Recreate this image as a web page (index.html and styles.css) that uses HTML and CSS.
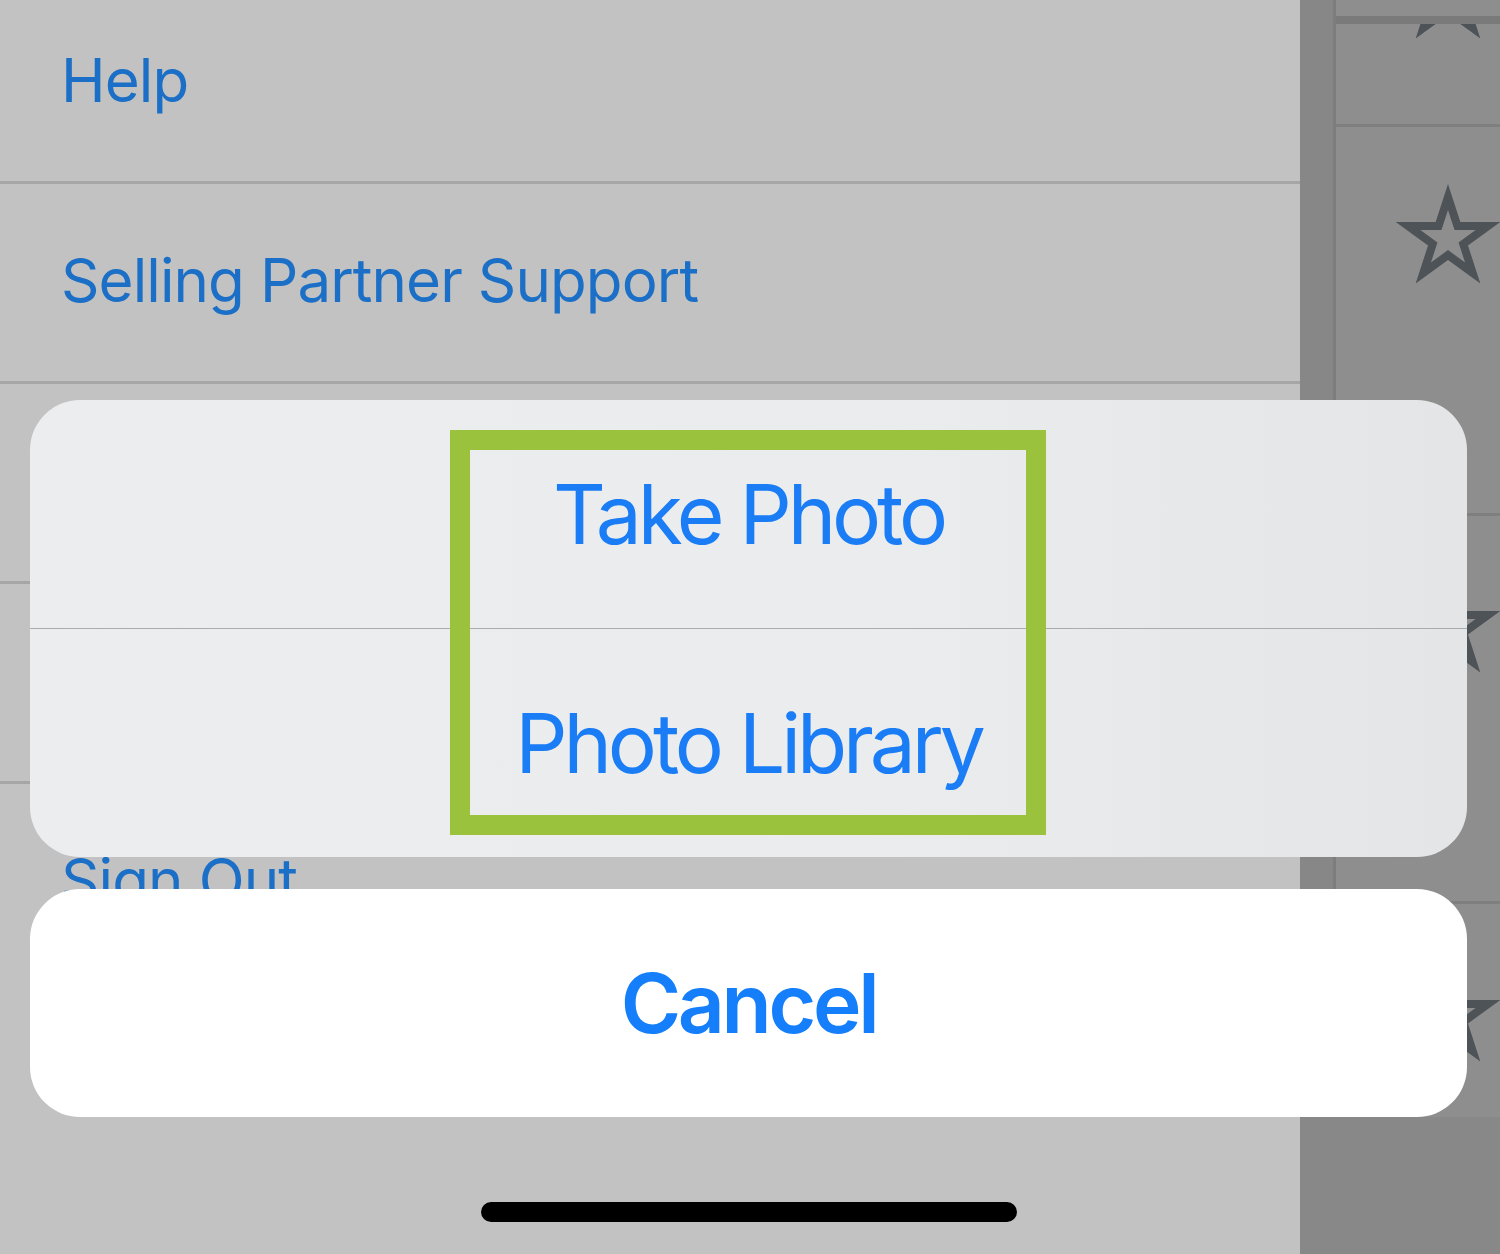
FILE: index.html
```html
<!DOCTYPE html>
<html lang="en">
<head>
<meta charset="utf-8">
<title>Photo picker</title>
<link rel="stylesheet" href="styles.css">
</head>
<body>
<div class="screen">
  <div class="menu">
    <div class="menu-row"><span>Help</span></div>
    <div class="menu-row"><span>Selling Partner Support</span></div>
    <div class="menu-row"></div>
    <div class="menu-row"></div>
    <div class="menu-row menu-row-last"><span>Sign Out</span></div>
  </div>
  <div class="side">
    <div class="side-main">
      <div class="side-band"></div>
      <div class="side-rows">
        <div class="srow srow-head"></div>
        <div class="srow srow-a">
          <svg class="star star-a" viewBox="-55 -55 110 100" width="110" height="100"><path fill-rule="evenodd" d="M0,-55 L12.35,-17 L52.31,-17 L19.98,6.49 L32.33,44.5 L0,21.01 L-32.33,44.5 L-19.98,6.49 L-52.31,-17 L-12.35,-17 Z M0,-29 L6.51,-8.96 L27.58,-8.96 L10.54,3.42 L17.05,23.46 L0,11.08 L-17.05,23.46 L-10.54,3.42 L-27.58,-8.96 L-6.51,-8.96 Z"/></svg>
        </div>
        <div class="srow srow-b">
          <svg class="star star-b" viewBox="-55 -55 110 100" width="110" height="100"><path fill-rule="evenodd" d="M0,-55 L12.35,-17 L52.31,-17 L19.98,6.49 L32.33,44.5 L0,21.01 L-32.33,44.5 L-19.98,6.49 L-52.31,-17 L-12.35,-17 Z M0,-29 L6.51,-8.96 L27.58,-8.96 L10.54,3.42 L17.05,23.46 L0,11.08 L-17.05,23.46 L-10.54,3.42 L-27.58,-8.96 L-6.51,-8.96 Z"/></svg>
        </div>
        <div class="srow srow-c">
          <svg class="star star-b" viewBox="-55 -55 110 100" width="110" height="100"><path fill-rule="evenodd" d="M0,-55 L12.35,-17 L52.31,-17 L19.98,6.49 L32.33,44.5 L0,21.01 L-32.33,44.5 L-19.98,6.49 L-52.31,-17 L-12.35,-17 Z M0,-29 L6.51,-8.96 L27.58,-8.96 L10.54,3.42 L17.05,23.46 L0,11.08 L-17.05,23.46 L-10.54,3.42 L-27.58,-8.96 L-6.51,-8.96 Z"/></svg>
        </div>
        <div class="srow srow-d">
          <svg class="star star-d" viewBox="-55 -55 110 100" width="110" height="100"><path fill-rule="evenodd" d="M0,-55 L12.35,-17 L52.31,-17 L19.98,6.49 L32.33,44.5 L0,21.01 L-32.33,44.5 L-19.98,6.49 L-52.31,-17 L-12.35,-17 Z M0,-29 L6.51,-8.96 L27.58,-8.96 L10.54,3.42 L17.05,23.46 L0,11.08 L-17.05,23.46 L-10.54,3.42 L-27.58,-8.96 L-6.51,-8.96 Z"/></svg>
        </div>
      </div>
    </div>
    <div class="side-foot"></div>
  </div>
</div>

<div class="sheet-layer">
  <div class="sheet">
    <div class="sheet-btn">Take Photo</div>
    <div class="sheet-sep"></div>
    <div class="sheet-btn">Photo Library</div>
    <div class="highlight"></div>
  </div>
  <div class="cancel">Cancel</div>
  <div class="home-bar"></div>
</div>
</body>
</html>
```

FILE: styles.css
```css
html, body {
  margin: 0;
  padding: 0;
}

body {
  width: 1500px;
  height: 1254px;
  overflow: hidden;
  position: relative;
  font-family: Inter, "Noto Sans", sans-serif;
  background: #c1c2c1;
}

.screen {
  display: flex;
  height: 1254px;
}

/* left menu */
.menu {
  width: 1300px;
  flex-shrink: 0;
  margin-top: -16px;
  background: #c1c2c1;
}

.menu-row {
  height: 197px;
  box-sizing: content-box;
  border-bottom: 3px solid #a5a6a5;
  padding-left: 61px;
  display: flex;
  align-items: center;
  font-size: 60px;
  line-height: 72px;
  letter-spacing: -0.015em;
  color: #1b6fc6;
}

.menu-row span {
  margin-bottom: 5px;
}

.menu-row-last {
  border-bottom: 0;
}

/* right strip */
.side {
  width: 200px;
  flex-shrink: 0;
  display: flex;
  flex-direction: column;
  background: #8e8e8e;
}

.side-main {
  display: flex;
  height: 1117px;
}

.side-band {
  width: 33px;
  flex-shrink: 0;
  background: #878787;
  border-right: 3px solid #7d7d7d;
}

.side-rows {
  flex: 1;
  min-width: 0;
  display: flex;
  flex-direction: column;
}

.srow {
  flex-shrink: 0;
  overflow: hidden;
  border-bottom: 3px solid #7f7f7f;
}

.srow-head {
  height: 16px;
  border-bottom: 8px solid #7a7a7a;
}

.srow-a { height: 100px; }
.srow-b { height: 386px; }
.srow-c { height: 385px; }
.srow-d { height: 213px; border-bottom: 0; }

.star {
  display: block;
  fill: #4e5358;
  margin-left: 57px;
}

.star-a { margin-top: -85px; }
.star-b { margin-top: 57px; }
.star-d { margin-top: 58px; }

.side-foot {
  flex: 1;
  background: #888888;
}

/* action sheet overlay */
.sheet-layer {
  position: absolute;
  left: 30px;
  top: 400px;
  width: 1437px;
  display: flex;
  flex-direction: column;
}

.sheet {
  position: relative;
  border-radius: 50px;
  background: linear-gradient(90deg, #ecedef 0%, #ebeced 60%, #e4e5e6 100%);
}

.sheet-btn {
  height: 228px;
  display: flex;
  align-items: center;
  justify-content: center;
  font-size: 82px;
  letter-spacing: -0.05em;
  color: #1a7df6;
}

.sheet-sep {
  height: 1px;
  background: #aaabad;
}

.highlight {
  position: absolute;
  left: 420px;
  top: 30px;
  width: 596px;
  height: 405px;
  box-sizing: border-box;
  border: 20px solid #9bc23c;
}

.cancel {
  margin-top: 32px;
  height: 228px;
  border-radius: 50px;
  background: #ffffff;
  display: flex;
  align-items: center;
  justify-content: center;
  font-size: 82px;
  font-weight: 600;
  letter-spacing: -0.04em;
  color: #147efb;
}

.home-bar {
  margin-top: 85px;
  align-self: center;
  width: 536px;
  height: 20px;
  border-radius: 10px;
  background: #000000;
}
```
